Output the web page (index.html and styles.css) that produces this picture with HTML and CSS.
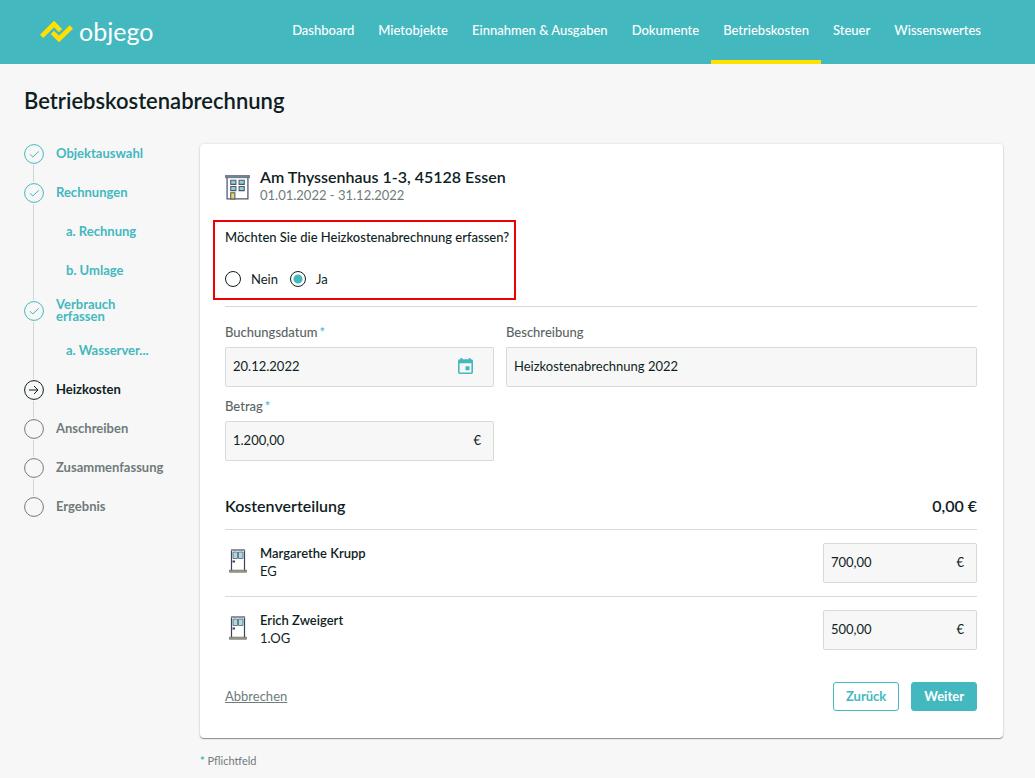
FILE: index.html
```html
<!DOCTYPE html>
<html lang="de">
<head>
<meta charset="utf-8">
<meta name="viewport" content="width=device-width, initial-scale=1">
<title>objego – Betriebskostenabrechnung</title>
<link rel="stylesheet" href="styles.css">
</head>
<body>
<svg class="defs" aria-hidden="true">
  <symbol id="check" viewBox="0 0 20 20"><circle cx="10" cy="10" r="9.4"/><path d="M6 10.2l2.8 2.8 6-5.6"/></symbol>
  <symbol id="arrow" viewBox="0 0 20 20"><circle cx="10" cy="10" r="9.4"/><path d="M5 10h9M10 6l4 4-4 4"/></symbol>
  <symbol id="open" viewBox="0 0 20 20"><circle cx="10" cy="10" r="9.4"/></symbol>
  <symbol id="door" viewBox="0 0 18 24">
    <path fill="#fff" stroke="#3d4260" stroke-width="1.2" d="M2.5 22V1h13v21"/>
    <path fill="#8d93a0" d="M2 0h14v2H2z"/>
    <path fill="#a9dadd" stroke="#596078" stroke-width=".8" d="M4 3h4.500v6.500H4zM9.500 3H14v6.500H9.500z"/>
    <path fill="#3d4260" d="M3.500 11.500h2.500v2H3.500z"/>
    <path fill="#a9a56b" stroke="#686d7c" stroke-width=".8" d="M.5 21.200h17v2H.5z"/>
  </symbol>
</svg>
<header class="topbar">
  <a class="logo" href="#" aria-label="objego">
    <svg class="logo-mark" viewBox="0 0 33 22" aria-hidden="true">
      <path fill="none" stroke="#ffe000" stroke-width="4.600" d="M1.600 15.400L14 3l6.500 6.600M12.300 11.300L19 18 31.400 6"/>
    </svg>
    <span>objego</span>
  </a>
  <nav class="nav">
    <a href="#">Dashboard</a>
    <a href="#">Mietobjekte</a>
    <a href="#">Einnahmen &amp; Ausgaben</a>
    <a href="#">Dokumente</a>
    <a class="active" href="#" aria-current="page">Betriebskosten</a>
    <a href="#">Steuer</a>
    <a href="#">Wissenswertes</a>
  </nav>
</header>
<main class="page">
  <h1>Betriebskostenabrechnung</h1>
  <div class="columns">
    <ol class="steps">
      <li class="done"><svg><use href="#check"/></svg><a href="#">Objektauswahl</a></li>
      <li class="done"><svg><use href="#check"/></svg><a href="#">Rechnungen</a></li>
      <li class="done sub"><a href="#">a. Rechnung</a></li>
      <li class="done sub"><a href="#">b. Umlage</a></li>
      <li class="done double"><svg><use href="#check"/></svg><a href="#">Verbrauch<br>erfassen</a></li>
      <li class="done sub"><a href="#">a. Wasserver...</a></li>
      <li class="current" aria-current="step"><svg><use href="#arrow"/></svg><a href="#">Heizkosten</a></li>
      <li><svg><use href="#open"/></svg><span>Anschreiben</span></li>
      <li><svg><use href="#open"/></svg><span>Zusammenfassung</span></li>
      <li><svg><use href="#open"/></svg><span>Ergebnis</span></li>
    </ol>
    <div class="content">
      <form class="card">
        <div class="property">
          <svg class="house" viewBox="0 0 24 24" aria-hidden="true">
            <path fill="#fff" stroke="#4f5670" stroke-width="1.200" d="M2 2v21h20V2"/>
            <path fill="#6b8792" stroke="#4f5670" stroke-width=".6" d="M.3.400h23.400v2.200H.3z"/>
            <path fill="#8fd0d0" stroke="#4f5670" stroke-width="1" d="M5.500 5h5v4h-5zM13.500 5h5v4h-5zM5.500 11h5v4h-5zM13.500 11h5v4h-5z"/>
            <path fill="#e5d85c" stroke="#4f5670" stroke-width="1" d="M5.500 17h4v6h-4z"/>
          </svg>
          <div>
            <h2>Am Thyssenhaus 1-3, 45128 Essen</h2>
            <p>01.01.2022 - 31.12.2022</p>
          </div>
        </div>
        <fieldset class="choice">
          <legend>Möchten Sie die Heizkostenabrechnung erfassen?</legend>
          <div class="options">
            <label><input type="radio" name="heating" value="no">Nein</label>
            <label><input type="radio" name="heating" value="yes" checked>Ja</label>
          </div>
        </fieldset>
        <div class="fields">
          <div class="field">
            <label for="date">Buchungsdatum<span class="req">*</span></label>
            <div class="box">
              <input id="date" type="text" value="20.12.2022" required>
              <button class="calendar" type="button" aria-label="Kalender öffnen">
                <svg viewBox="0 0 15 16" aria-hidden="true"><path fill="currentColor" fill-rule="evenodd" d="M2.500 0h1.800v1.300h6.400V0h1.800v1.300h.8A1.700 1.700 0 0 1 15 3v11.300a1.700 1.700 0 0 1-1.700 1.700H1.700A1.700 1.700 0 0 1 0 14.300V3a1.700 1.700 0 0 1 1.700-1.700h.8zM1.600 5.200v9.200h11.800V5.200zM7.500 8.300h4v4h-4z"/></svg>
              </button>
            </div>
          </div>
          <div class="field">
            <label for="desc">Beschreibung</label>
            <div class="box"><input id="desc" type="text" value="Heizkostenabrechnung 2022"></div>
          </div>
          <div class="field">
            <label for="amount">Betrag<span class="req">*</span></label>
            <div class="box"><input id="amount" type="text" value="1.200,00" required><span class="unit">€</span></div>
          </div>
        </div>
        <div class="total"><h2>Kostenverteilung</h2><strong>0,00 €</strong></div>
        <div class="tenant">
          <svg class="door" aria-hidden="true"><use href="#door"/></svg>
          <label for="t1"><b>Margarethe Krupp</b>EG</label>
          <div class="box"><input id="t1" type="text" value="700,00"><span class="unit">€</span></div>
        </div>
        <div class="tenant">
          <svg class="door" aria-hidden="true"><use href="#door"/></svg>
          <label for="t2"><b>Erich Zweigert</b>1.OG</label>
          <div class="box"><input id="t2" type="text" value="500,00"><span class="unit">€</span></div>
        </div>
        <div class="actions">
          <a href="#">Abbrechen</a>
          <button class="btn" type="button">Zurück</button>
          <button class="btn primary" type="submit">Weiter</button>
        </div>
      </form>
      <p class="note"><span>*</span> Pflichtfeld</p>
    </div>
  </div>
</main>
</body>
</html>
```

FILE: styles.css
```css
* { box-sizing: border-box; }

body {
  margin: 0;
  background: #f7f7f7;
  color: #0f1e1e;
  font: 13px/18px Lato, "Open Sans", sans-serif;
}

h1, h2, p, ol { margin: 0; padding: 0; font-weight: 600; }
a { color: inherit; text-decoration: none; }
input, button { font: inherit; color: inherit; }
.defs { display: none; }

.topbar {
  display: flex;
  justify-content: space-between;
  height: 64px;
  padding: 0 42px 0 40px;
  background: #43b8bf;
  color: #fff;
}

.logo {
  display: flex;
  align-items: center;
  gap: 6px;
  font: 400 25px/28px Lato, sans-serif;
}
.logo span { padding-bottom: 3px; }
.logo-mark { width: 33px; height: 22px; }

.nav { display: flex; font-weight: 500; }
.nav a {
  padding: 21px 12px;
  border-bottom: 4px solid transparent;
  white-space: nowrap;
}
.nav .active { border-color: #ffe000; }

.page { padding: 23px 32px 8px 24px; }
h1 { font-size: 22px; line-height: 28px; }

.columns { display: flex; gap: 24px; padding-top: 29px; }

.steps {
  flex: 0 0 152px;
  list-style: none;
  margin-top: -10px;
  color: #6f7b7b;
  font-weight: 700;
}
.steps li {
  display: grid;
  grid-template-columns: 20px 1fr;
  column-gap: 12px;
  align-items: center;
  height: 39px;
  background: linear-gradient(#d3d6d6, #d3d6d6) 9px 0 / 1px 100% no-repeat;
}
.steps li:first-child { background-size: 1px 50%; background-position: 9px 100%; }
.steps li:last-child { background-size: 1px 50%; }
.steps a, .steps span { padding-bottom: 2px; }
.steps svg {
  width: 20px;
  height: 20px;
  fill: #f7f7f7;
  stroke: currentColor;
  stroke-width: 1;
  outline: 1px solid #f7f7f7;
  background: #f7f7f7;
}
.steps .done { color: #43b8bf; }
.steps .current { color: #0f1e1e; }
.steps .sub { padding-left: 10px; }
.steps .sub a { grid-column: 2; }
.steps .double { height: 41px; line-height: 12px; }

.content { flex: 1; min-width: 0; }
.card {
  padding: 23px 26px 27px 25px;
  background: #fff;
  border-radius: 4px;
  box-shadow: 0 1px 1px #8b8f8f, 0 0 3px rgba(0, 0, 0, .12);
}

.property { display: flex; align-items: center; gap: 10px; }
.house { width: 25px; height: 25px; margin-top: 4px; }
h2 { font-size: 16px; line-height: 20px; }
.property p { color: #6f7b7b; font-weight: 400; line-height: 16px; }

.choice {
  width: 303px;
  min-width: 0;
  height: 80px;
  margin: 17px 0 6px -12px;
  padding: 6px 0 6px 10px;
  border: 2px solid #f00000;
}
.choice legend { float: left; padding: 0; font-weight: 500; white-space: nowrap; }
.options { clear: both; display: flex; gap: 12px; padding-top: 24px; }
.options label { display: flex; align-items: center; gap: 10px; }
.options input {
  appearance: none;
  width: 16px;
  height: 16px;
  margin: 0;
  border: 1px solid #0f1e1e;
  border-radius: 50%;
}
.options input:checked { background: radial-gradient(circle, #43b8bf 4px, #fff 5px); }

.fields {
  display: grid;
  grid-template-columns: 269fr 471fr;
  gap: 10px 12px;
  padding-top: 16px;
  border-top: 1px solid #d6dada;
}
.field > label { display: block; margin-bottom: 6px; color: #5b6464; font-weight: 500; }
.req { margin-left: 2px; color: #43b8bf; }
.box {
  display: flex;
  align-items: center;
  height: 40px;
  border: 1px solid #d6dada;
  border-radius: 2px;
  background: #f7f7f7;
}
.box input {
  flex: 1;
  min-width: 0;
  height: 36px;
  padding: 0 7px 2px;
  border: 0;
  background: none;
}
.unit { padding: 0 12px 2px 0; }
.calendar {
  display: flex;
  padding: 0 0 2px;
  margin-right: 20px;
  border: 0;
  background: none;
  color: #43b8bf;
}
.calendar svg { width: 15px; height: 16px; }

.total {
  display: flex;
  justify-content: space-between;
  padding: 35px 0 13px;
  font-size: 16px;
  line-height: 20px;
}
.total strong { font-weight: 600; }

.tenant {
  display: flex;
  align-items: center;
  gap: 13px;
  height: 67px;
  padding-left: 4px;
  border-top: 1px solid #d6dada;
}
.door { width: 18px; height: 24px; margin-bottom: 4px; }
.tenant label { flex: 1; padding-bottom: 2px; }
.tenant b { display: block; font-weight: 600; }
.tenant .box { width: 154px; }

.actions { display: flex; align-items: center; gap: 12px; padding-top: 19px; }
.actions a { margin-right: auto; padding-bottom: 2px; color: #6f7b7b; text-decoration: underline; }
.btn {
  height: 29px;
  padding: 0 12px 2px;
  border: 1px solid #43b8bf;
  border-radius: 3px;
  background: #fff;
  color: #43b8bf;
  font-weight: 700;
}
.btn.primary { background: #43b8bf; color: #fff; }

.note { padding-top: 14px; color: #6f7b7b; font-size: 11px; font-weight: 400; }
.note span { color: #43b8bf; font-weight: 700; }
```
